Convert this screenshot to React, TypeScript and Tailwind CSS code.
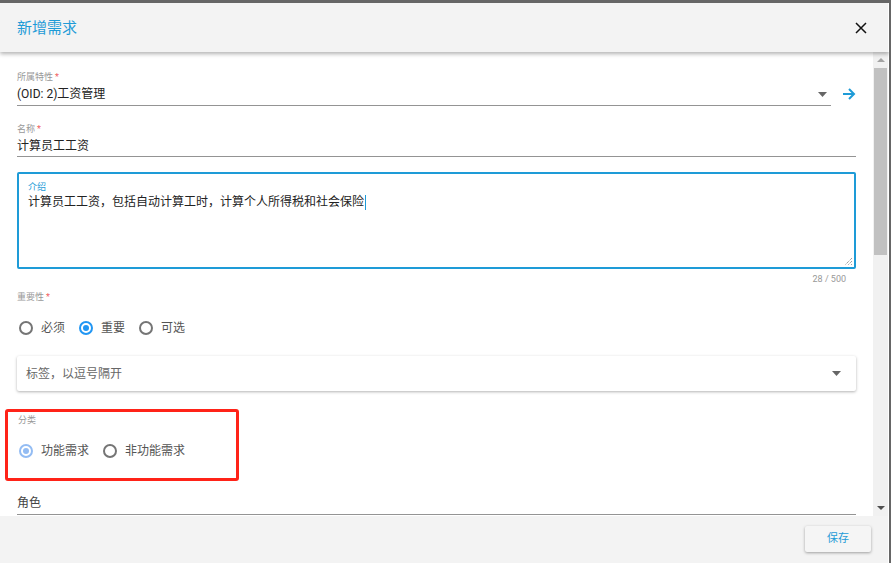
import React from "react";

const font = { fontFamily: '"Roboto", "Noto Sans CJK SC", sans-serif' };

function Radio({ checked, disabled }: { checked?: boolean; disabled?: boolean }) {
  const color = disabled ? "border-[#93bcf3]" : checked ? "border-[#2196f3]" : "border-[#757575]";
  return (
    <span className={`flex h-[14px] w-[14px] shrink-0 items-center justify-center rounded-full border-2 ${color}`}>
      {checked && (
        <span className={`h-[6px] w-[6px] rounded-full ${disabled ? "bg-[#93bcf3]" : "bg-[#2196f3]"}`} />
      )}
    </span>
  );
}

function RadioItem({ label, checked, disabled }: { label: string; checked?: boolean; disabled?: boolean }) {
  return (
    <div className="flex items-center">
      <Radio checked={checked} disabled={disabled} />
      <span className="ml-[8px] text-[12px] leading-[20px] text-[#555]">{label}</span>
    </div>
  );
}

function Label({ text, req, blue }: { text: string; req?: boolean; blue?: boolean }) {
  return (
    <div className={`h-[12px] text-[9px] leading-[12px] ${blue ? "text-[#1e9bd7]" : "text-[#999]"}`}>
      {text}
      {req && <span className="ml-[2px] text-[#f06060]">*</span>}
    </div>
  );
}

function Caret() {
  return (
    <svg width="9" height="5" viewBox="0 0 9 5">
      <path d="M0 0h9L4.5 5z" fill="#666" />
    </svg>
  );
}

export default function App() {
  return (
    <div
      className="flex h-[563px] w-[891px] flex-col overflow-hidden border-t-[3px] border-r-[2px] border-[#666] bg-white"
      style={font}
    >
      {/* header */}
      <div className="relative z-10 flex h-[49px] shrink-0 items-center justify-between border-r border-white bg-[#f3f3f3] pl-[17px] pr-[21px] shadow-[0_2px_4px_rgba(0,0,0,0.3)]">
        <span className="text-[15px] leading-[20px] text-[#1e9bd7]">新增需求</span>
        <svg width="12" height="12" viewBox="0 0 12 12">
          <path d="M1 1L11 11M11 1L1 11" stroke="#111" strokeWidth="1.5" />
        </svg>
      </div>

      {/* body */}
      <div className="flex h-[464px] shrink-0 border-r border-white">
        <div className="relative flex flex-1 flex-col px-[17px] pt-[19px]">
          {/* 所属特性 */}
          <div className="flex items-end">
            <div className="flex-1">
              <Label text="所属特性" req />
              <div className="flex h-[23px] items-center justify-between border-b border-[#949494] pr-[4px]">
                <span className="text-[12px] leading-[20px] text-[#222]">(OID: 2)工资管理</span>
                <Caret />
              </div>
            </div>
            <div className="flex h-[23px] w-[25px] items-center justify-end pb-[1px]">
              <svg width="14" height="12" viewBox="0 0 14 12">
                <path d="M1 6H12M7 1l5 5-5 5" stroke="#1e9bd7" strokeWidth="2" fill="none" />
              </svg>
            </div>
          </div>

          {/* 名称 */}
          <div className="mt-[17px]">
            <Label text="名称" req />
            <div className="flex h-[22px] items-center border-b border-[#949494]">
              <span className="text-[12px] leading-[20px] text-[#222]">计算员工工资</span>
            </div>
          </div>

          {/* 介绍 */}
          <div className="relative mt-[15px] h-[97px] rounded-[2px] border-2 border-[#1e9bd7] px-[9px] pt-[7px]">
            <Label text="介绍" blue />
            <div className="flex items-center text-[12px] leading-[18px] text-[#222]">
              计算员工工资，包括自动计算工时，计算个人所得税和社会保险
              <span className="ml-[1px] h-[15px] w-[1px] bg-[#1e9bd7]" />
            </div>
            <svg className="absolute bottom-[1px] right-[1px]" width="9" height="9" viewBox="0 0 9 9">
              <path d="M8 1L1 8M8 4L4 8M8 7L7 8" stroke="#555" strokeWidth="0.8" strokeDasharray="1 1" />
            </svg>
          </div>
          <div className="mt-[4px] h-[12px] pr-[10px] text-right text-[9px] leading-[12px] text-[#999]">28 / 500</div>

          {/* 重要性 */}
          <div className="mt-[6px]">
            <Label text="重要性" req />
          </div>
          <div className="mt-[15px] flex items-center gap-[14px] pl-[2px]">
            <RadioItem label="必须" />
            <RadioItem label="重要" checked />
            <RadioItem label="可选" />
          </div>

          {/* 标签 */}
          <div className="mt-[18px] flex h-[35px] items-center justify-between rounded-[2px] bg-white pl-[9px] pr-[15px] shadow-[0_1px_3px_rgba(0,0,0,0.3)]">
            <span className="text-[12px] text-[#666]">标签，以逗号隔开</span>
            <Caret />
          </div>

          {/* 分类 */}
          <div className="relative mt-[23px]">
            <div className="absolute left-[-12px] top-[-5px] h-[72px] w-[234px] rounded-[3px] border-[3px] border-[#ff2318]" />
            <div className="pl-[1px]">
              <Label text="分类" />
            </div>
            <div className="mt-[15px] flex items-center gap-[14px] pl-[2px]">
              <RadioItem label="功能需求" checked disabled />
              <RadioItem label="非功能需求" />
            </div>
          </div>

          {/* 角色 */}
          <div className="mt-[31px] flex h-[23px] items-center border-b border-[#949494]">
            <span className="text-[12px] leading-[20px] text-[#444]">角色</span>
          </div>
        </div>

        {/* scrollbar */}
        <div className="flex w-[15px] shrink-0 flex-col items-center bg-[#f1f1f1]">
          <div className="flex h-[16px] w-full items-center justify-center">
            <svg width="8" height="4" viewBox="0 0 8 4">
              <path d="M0 4h8L4 0z" fill="#a3a3a3" />
            </svg>
          </div>
          <div className="h-[187px] w-[13px] bg-[#c1c1c1]" />
          <div className="flex-1" />
          <div className="flex h-[16px] w-full items-center justify-center">
            <svg width="8" height="4" viewBox="0 0 8 4">
              <path d="M0 0h8L4 4z" fill="#505050" />
            </svg>
          </div>
        </div>
      </div>

      {/* footer */}
      <div className="flex flex-1 items-start justify-end border-r border-white bg-[#f3f3f3] pr-[17px] pt-[10px]">
        <button className="flex h-[26px] w-[66px] items-center justify-center rounded-[2px] bg-[#f5f5f5] text-[11px] text-[#1e9bd7] shadow-[0_1px_3px_rgba(0,0,0,0.35)]">
          保存
        </button>
      </div>
    </div>
  );
}
